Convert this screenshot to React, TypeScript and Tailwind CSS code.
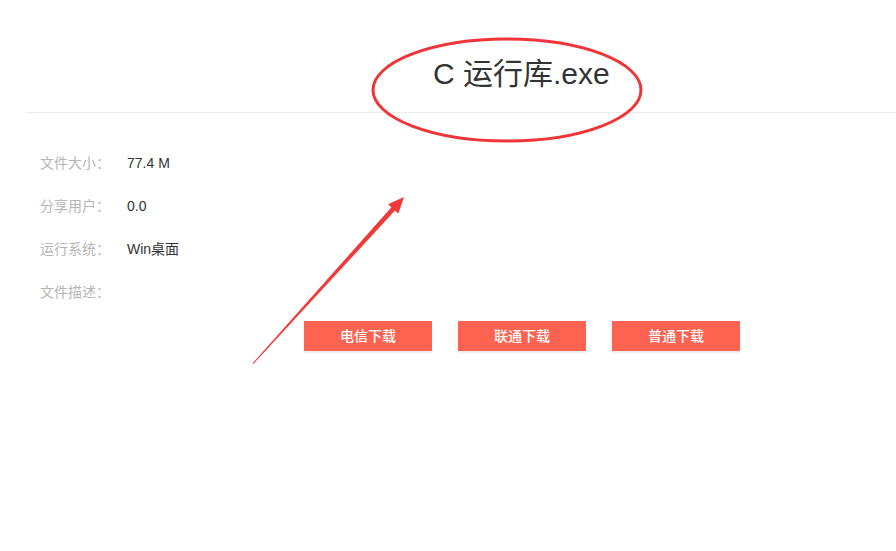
const rows = [
  { label: '文件大小：', value: '77.4 M' },
  { label: '分享用户：', value: '0.0' },
  { label: '运行系统：', value: 'Win桌面' },
  { label: '文件描述：', value: '' },
];

const buttons = ['电信下载', '联通下载', '普通下载'];

export default function App() {
  return (
    <div
      className="relative w-[896px] h-[551px] bg-white overflow-hidden"
      style={{ fontFamily: '"Liberation Sans", "Noto Sans CJK SC", sans-serif' }}
    >
      <div className="ml-[25px] h-[113px] border-b border-[#ebebeb]">
        <h1 className="pl-[408px] pt-[56px] text-[30px] leading-[36px] text-[#333]">C 运行库.exe</h1>
      </div>

      <div className="pl-[40px] pt-[29px]">
        {rows.map(r => (
          <div key={r.label} className="flex items-center h-[43px] text-[14px]">
            <span className="w-[87px] text-[#b5b5b5]">{r.label}</span>
            <span className="text-[#333]">{r.value}</span>
          </div>
        ))}
      </div>

      <div className="flex gap-[26px] pl-[304px] mt-[7px]">
        {buttons.map(b => (
          <button
            key={b}
            className="w-[128px] h-[30px] bg-[#fe6251] text-white text-[14px] font-medium shadow-[0_2px_2px_rgba(0,0,0,0.08)]"
          >
            {b}
          </button>
        ))}
      </div>

      {/* red annotation marks over the page */}
      <svg className="absolute inset-0 pointer-events-none" width="896" height="551">
        <ellipse cx="507" cy="90" rx="134" ry="51" fill="none" stroke="#ef3538" strokeWidth="3" />
        <polygon
          points="252.6,363.3 391.4,207.2 388,204.2 404,197 398.4,213.6 395,210.6 253.6,363.8"
          fill="#f03a3a"
        />
      </svg>
    </div>
  );
}
